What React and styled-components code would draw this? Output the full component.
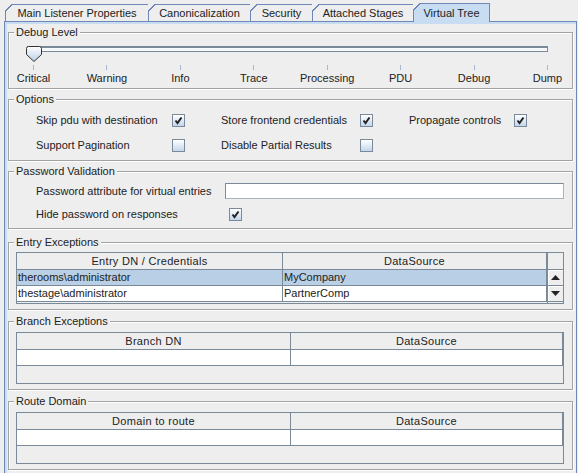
import styled, { createGlobalStyle } from 'styled-components';

const GlobalStyle = createGlobalStyle`
  html, body {
    margin: 0;
    padding: 0;
    background: #eeeeee;
  }
  body {
    font-family: "Liberation Sans", Arial, sans-serif;
    font-size: 11px;
    color: #222222;
  }
`;

const Window = styled.div`
  box-sizing: border-box;
  width: 578px;
  height: 473px;
  padding-top: 3px;
  overflow: hidden;
  background: #eeeeee;
`;

const TabStrip = styled.div`
  position: relative;
  z-index: 1;
  display: flex;
  align-items: flex-end;
  height: 18px;
  padding-left: 5px;
`;

const Tab = styled.div`
  position: relative;
  box-sizing: border-box;
  width: ${p => p.$w}px;
  height: ${p => (p.$active ? 19 : 17)}px;
  margin-right: -1px;
  margin-bottom: ${p => (p.$active ? -1 : 0)}px;
  display: flex;
  align-items: center;
  justify-content: center;
  border: 1px solid #7088b8;
  border-bottom: none;
  background: ${p => (p.$active ? '#c8ddf2' : '#eeeeee')};
  white-space: nowrap;

  &::before {
    content: '';
    position: absolute;
    left: -1px;
    top: -1px;
    width: 7px;
    height: 7px;
    background: linear-gradient(135deg, #eeeeee 0 44%, #7088b8 44% 58%, transparent 58%);
  }
`;

const Panel = styled.div`
  box-sizing: border-box;
  margin-left: 4px;
  width: 573px;
  height: 460px;
  padding: 4px 3px 0 3px;
  border: 1px solid #7088b8;
  border-bottom: none;
  box-shadow: inset 2px 2px 0 #c8ddf2;
  display: flex;
  flex-direction: column;
`;

const Group = styled.fieldset`
  box-sizing: border-box;
  min-width: 0;
  height: ${p => p.$h}px;
  margin: ${p => p.$gap || 0}px 0 0 0;
  padding: 0;
  border: 1px solid #a3a3a3;
  box-shadow: inset 1px 1px 0 #ffffff, 1px 1px 0 #ffffff;
`;

const Legend = styled.legend`
  margin-left: 5px;
  padding: 0 2px;
  line-height: 12px;
  background: #eeeeee;
`;

const Body = styled.div`
  padding: ${p => p.$pad};
`;

/* ---------- slider ---------- */

const SliderRow = styled.div`
  position: relative;
  width: 521px;
  height: 16px;
  margin-left: 18px;
`;

const Track = styled.div`
  box-sizing: border-box;
  height: 6px;
  margin-top: 5px;
  border: 1px solid #7a8a99;
  border-top-width: 2px;
  background: #f6f8fb;
`;

const Thumb = styled.svg`
  position: absolute;
  left: -1px;
  top: 0;
`;

const TickRow = styled.div`
  display: flex;
  justify-content: space-between;
  width: 515px;
  margin: 3px 0 0 24px;
`;

const Stop = styled.div`
  width: 1px;
  display: flex;
  flex-direction: column;
  align-items: center;
`;

const Tick = styled.div`
  width: 1px;
  height: 5px;
  background: #a3b8cc;
`;

const StopLabel = styled.div`
  margin-top: 2px;
  line-height: 13px;
  white-space: nowrap;
`;

/* ---------- options ---------- */

const Rows = styled.div`
  display: flex;
  flex-direction: column;
  gap: ${p => p.$gap}px;
`;

const Row = styled.div`
  display: flex;
  align-items: center;
  gap: 36px;
  height: ${p => p.$h || 13}px;
`;

const Pair = styled.div`
  display: flex;
  align-items: center;
  flex: ${p => (p.$grow ? 1 : 'none')};
`;

const Label = styled.span`
  width: ${p => p.$w}px;
  flex: none;
  line-height: 13px;
  white-space: nowrap;
`;

const Box = styled.span`
  box-sizing: border-box;
  width: 13px;
  height: 13px;
  display: flex;
  align-items: center;
  justify-content: center;
  border: 1px solid #7a8a99;
  background: linear-gradient(#ffffff, #c3d6ec);
`;

const TextField = styled.div`
  box-sizing: border-box;
  flex: 1;
  height: 16px;
  border: 1px solid #7a8a99;
  border-right-color: #a8b4c0;
  border-bottom-color: #a8b4c0;
  background: #ffffff;
`;

const Checkbox = ({ checked }) => (
  <Box>
    {checked && (
      <svg width="9" height="9" viewBox="0 0 9 9">
        <path d="M1.5 4.5 L3.5 7 L7.5 1.5" fill="none" stroke="#222" strokeWidth="2" />
      </svg>
    )}
  </Box>
);

/* ---------- tables ---------- */

const Pane = styled.div`
  box-sizing: border-box;
  height: 52px;
  display: flex;
  border: 1px solid #7a8a99;
  background: #eeeeee;
`;

const Grid = styled.div`
  flex: 1;
  display: grid;
  grid-template-columns: ${p => p.$cols};
  align-content: start;
`;

const HeadCell = styled.div`
  box-sizing: border-box;
  height: 17px;
  display: flex;
  align-items: center;
  justify-content: center;
  border-right: 1px solid #7a8a99;
  border-bottom: 1px solid #7a8a99;
  background: #eeeeee;
  letter-spacing: 0.3px;
`;

const Cell = styled.div`
  box-sizing: border-box;
  height: 16px;
  padding-left: 1px;
  line-height: 15px;
  border-right: 1px solid #7a8a99;
  border-bottom: 1px solid #7a8a99;
  background: ${p => (p.$selected ? '#b8cfe5' : '#ffffff')};
  white-space: nowrap;
  overflow: hidden;
`;

const ScrollColumn = styled.div`
  width: 15px;
  display: flex;
  flex-direction: column;
  border-left: 1px solid #7a8a99;
`;

const Corner = styled.div`
  height: 17px;
  box-sizing: border-box;
  border-bottom: 1px solid #7a8a99;
`;

const ArrowButton = styled.div`
  box-sizing: border-box;
  height: 16px;
  display: flex;
  align-items: center;
  justify-content: center;
  border-bottom: 1px solid #7a8a99;
  box-shadow: inset 1px 1px 0 #ffffff;
  background: #eeeeee;
`;

const Arrow = ({ down }) => (
  <svg width="9" height="5" viewBox="0 0 9 5">
    <path d={down ? 'M0 0 H9 L4.5 5 Z' : 'M0 5 H9 L4.5 0 Z'} fill="#222" />
  </svg>
);

const tabs = [
  { label: 'Main Listener Properties', w: 144 },
  { label: 'Canonicalization', w: 103 },
  { label: 'Security', w: 63 },
  { label: 'Attached Stages', w: 102 },
  { label: 'Virtual Tree', w: 77, active: true },
];

const levels = ['Critical', 'Warning', 'Info', 'Trace', 'Processing', 'PDU', 'Debug', 'Dump'];

const entries = [
  { dn: 'therooms\\administrator', ds: 'MyCompany', selected: true },
  { dn: 'thestage\\administrator', ds: 'PartnerComp' },
];

const EmptyTable = ({ first }) => (
  <Pane>
    <Grid $cols="274px 1fr">
      <HeadCell>{first}</HeadCell>
      <HeadCell>DataSource</HeadCell>
      <Cell />
      <Cell />
    </Grid>
  </Pane>
);

export default function App() {
  return (
    <Window>
      <GlobalStyle />
      <TabStrip>
        {tabs.map(t => (
          <Tab key={t.label} $w={t.w} $active={t.active}>
            {t.label}
          </Tab>
        ))}
      </TabStrip>
      <Panel>
        <Group $h={63}>
          <Legend>Debug Level</Legend>
          <Body $pad="3px 0 0 0">
            <SliderRow>
              <Track />
              <Thumb width="16" height="16" viewBox="0 0 16 16">
                <defs>
                  <linearGradient id="thumbFill" x1="0" y1="0" x2="0" y2="1">
                    <stop offset="0" stopColor="#ffffff" />
                    <stop offset="1" stopColor="#b8cfe5" />
                  </linearGradient>
                </defs>
                <path
                  d="M2.5 0.5 H13.5 Q15.5 0.5 15.5 2.5 V8.5 L8 15.5 L0.5 8.5 V2.5 Q0.5 0.5 2.5 0.5 Z"
                  fill="url(#thumbFill)"
                  stroke="#333"
                />
              </Thumb>
            </SliderRow>
            <TickRow>
              {levels.map(l => (
                <Stop key={l}>
                  <Tick />
                  <StopLabel>{l}</StopLabel>
                </Stop>
              ))}
            </TickRow>
          </Body>
        </Group>

        <Group $h={68} $gap={4}>
          <Legend>Options</Legend>
          <Body $pad="9px 0 0 27px">
            <Rows $gap={12}>
              <Row>
                <Pair>
                  <Label $w={136}>Skip pdu with destination</Label>
                  <Checkbox checked />
                </Pair>
                <Pair>
                  <Label $w={139}>Store frontend credentials</Label>
                  <Checkbox checked />
                </Pair>
                <Pair>
                  <Label $w={105}>Propagate controls</Label>
                  <Checkbox checked />
                </Pair>
              </Row>
              <Row>
                <Pair>
                  <Label $w={136}>Support Pagination</Label>
                  <Checkbox />
                </Pair>
                <Pair>
                  <Label $w={139}>Disable Partial Results</Label>
                  <Checkbox />
                </Pair>
              </Row>
            </Rows>
          </Body>
        </Group>

        <Group $h={64} $gap={4}>
          <Legend>Password Validation</Legend>
          <Body $pad="6px 8px 0 27px">
            <Rows $gap={9}>
              <Row $h={16}>
                <Pair $grow>
                  <Label $w={189}>Password attribute for virtual entries</Label>
                  <TextField />
                </Pair>
              </Row>
              <Row>
                <Pair>
                  <Label $w={193}>Hide password on responses</Label>
                  <Checkbox checked />
                </Pair>
              </Row>
            </Rows>
          </Body>
        </Group>

        <Group $h={74} $gap={7}>
          <Legend>Entry Exceptions</Legend>
          <Body $pad="4px 8px 0 7px">
            <Pane>
              <Grid $cols="266px 1fr">
                <HeadCell>Entry DN / Credentials</HeadCell>
                <HeadCell>DataSource</HeadCell>
                {entries.map(e => [
                  <Cell key={e.dn} $selected={e.selected}>{e.dn}</Cell>,
                  <Cell key={e.ds} $selected={e.selected}>{e.ds}</Cell>,
                ])}
              </Grid>
              <ScrollColumn>
                <Corner />
                <ArrowButton>
                  <Arrow />
                </ArrowButton>
                <ArrowButton>
                  <Arrow down />
                </ArrowButton>
              </ScrollColumn>
            </Pane>
          </Body>
        </Group>

        <Group $h={75} $gap={5}>
          <Legend>Branch Exceptions</Legend>
          <Body $pad="5px 8px 0 7px">
            <EmptyTable first="Branch DN" />
          </Body>
        </Group>

        <Group $h={75} $gap={5}>
          <Legend>Route Domain</Legend>
          <Body $pad="5px 8px 0 7px">
            <EmptyTable first="Domain to route" />
          </Body>
        </Group>
      </Panel>
    </Window>
  );
}
